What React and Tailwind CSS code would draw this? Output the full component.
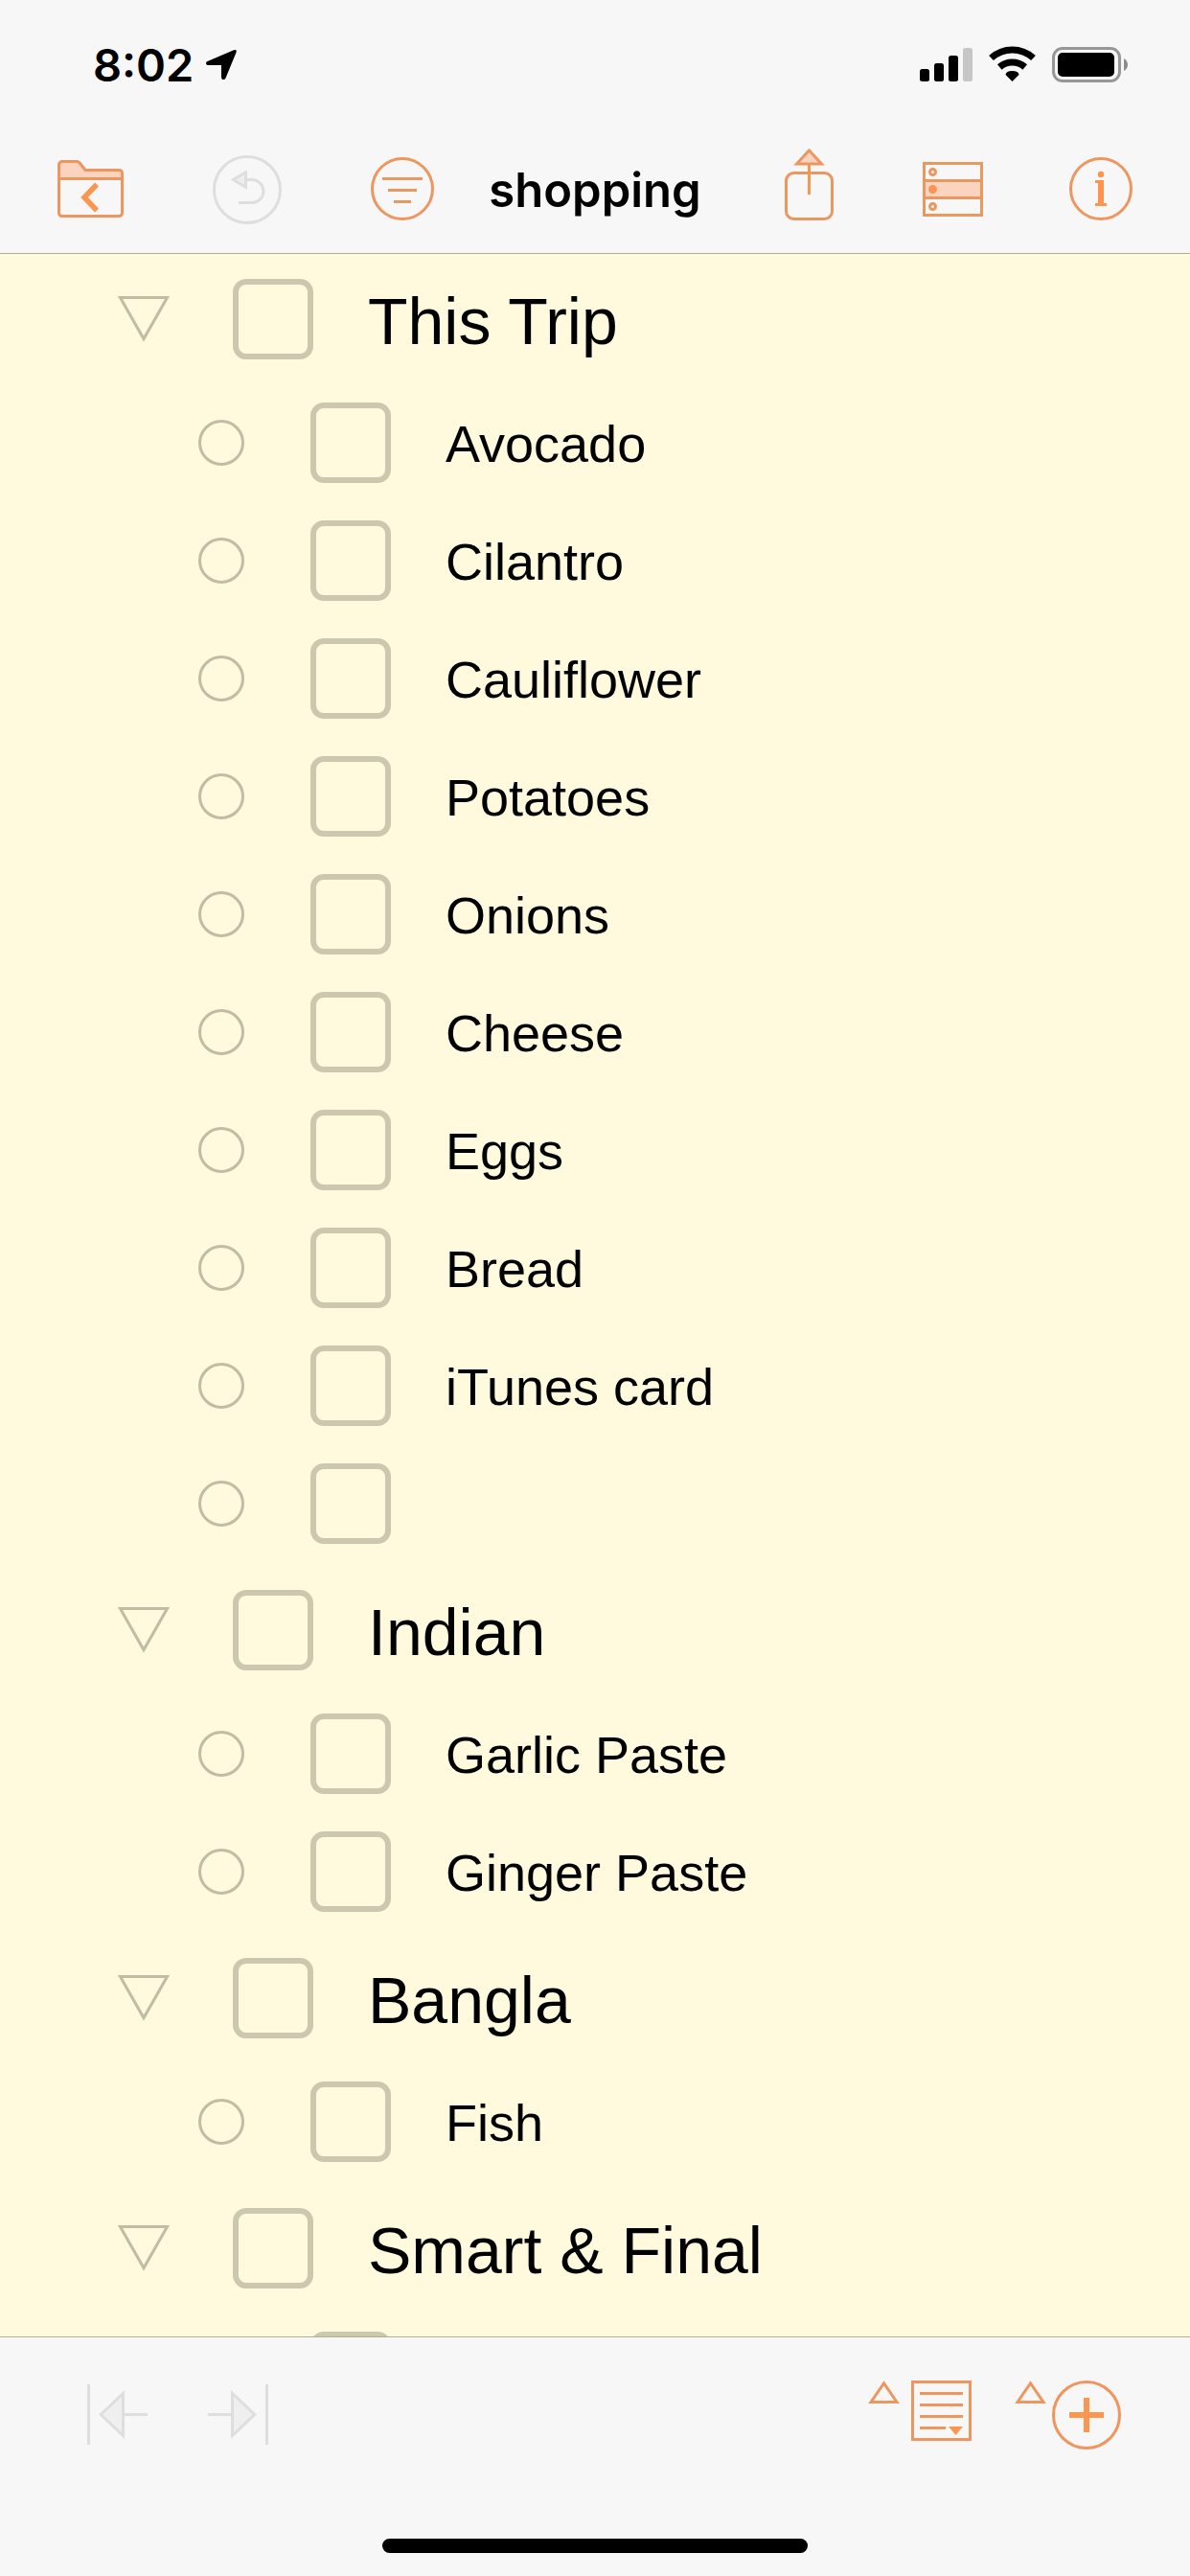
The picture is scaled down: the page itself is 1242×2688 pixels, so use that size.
const ORANGE = "#ee9660";
const BRIGHT = "#fb9550";
const PALE = "#fbd4bf";
const GRAY = "#dedede";
const GRAY_FILL = "#efefef";

const groups = [
  {
    title: "This Trip",
    items: ["Avocado", "Cilantro", "Cauliflower", "Potatoes", "Onions", "Cheese", "Eggs", "Bread", "iTunes card", ""],
  },
  { title: "Indian", items: ["Garlic Paste", "Ginger Paste"] },
  { title: "Bangla", items: ["Fish"] },
  { title: "Smart & Final", items: [""] },
];

function ToolIcon({ label, disabled, children }) {
  return (
    <button type="button" aria-label={label} disabled={disabled} className="block shrink-0">
      <svg viewBox="0 0 72 88" fill="none" stroke={disabled ? GRAY : ORANGE} strokeWidth="3" className="block h-[88px] w-[72px]">
        {children}
      </svg>
    </button>
  );
}

function StatusBar() {
  return (
    <div className="flex h-[132px] items-start justify-between pt-12 pr-16 pl-[97px]">
      <div className="flex gap-3">
        <span className="font-['Inter',sans-serif] text-[47px] leading-10 font-semibold">8:02</span>
        <svg viewBox="0 0 34 40" className="h-10 w-[34px]" role="img" aria-label="Location in use">
          <path d="M2.500 16 30 4.200Q33.500 3.200 32.500 6.800L21.500 33.500Q20.500 35.500 18.500 35Q17 34.500 17 32.500V20H3Q1 19.800 1 18Q1 16.600 2.500 16Z" />
        </svg>
      </div>
      <div className="flex gap-4">
        <svg viewBox="0 0 56 40" className="h-10 w-14" role="img" aria-label="Signal strength">
          <rect x="0" y="24" width="10" height="13" rx="2.500" />
          <rect x="15" y="18" width="10" height="19" rx="2.500" />
          <rect x="30" y="10" width="10" height="27" rx="2.500" />
          <rect x="45" y="2" width="10" height="35" rx="2.500" fill="#c6c6c6" />
        </svg>
        <svg viewBox="0 0 50 40" className="h-10 w-[50px]" role="img" aria-label="Wi-Fi">
          <path d="M2.500 12.500A32.500 32.500 0 0 1 46.500 12.500" fill="none" stroke="#000" strokeWidth="7" />
          <path d="M11.300 22A20 20 0 0 1 37.700 22" fill="none" stroke="#000" strokeWidth="7" />
          <path d="M24.500 37 17.500 30Q18 26 24.500 26T31.500 30Z" />
        </svg>
        <svg viewBox="0 0 80 40" className="h-10 w-20" role="img" aria-label="Battery">
          <rect x="1.500" y="2.500" width="69" height="34" rx="9.500" fill="none" stroke="#979797" strokeWidth="3" />
          <rect x="6" y="7" width="59" height="25" rx="5" />
          <path d="M75 13Q79 15.500 79 19.500T75 26Z" fill="#8c8c8c" />
        </svg>
      </div>
    </div>
  );
}

function Toolbar() {
  return (
    <nav className="grid h-[132px] grid-cols-[1fr_auto_1fr] items-center px-[58px]">
      <div className="flex gap-[92px]">
        <ToolIcon label="Documents">
          <path d="M3.500 32V18.500q0-4 4-4H22q2 0 3.200 1.400L31 23.500h35q3.500 0 3.500 3.500v5Z" fill={PALE} stroke="none" />
          <path d="M3.500 18.500q0-4 4-4H22q2 0 3.200 1.400L31 23.500h35q3.500 0 3.500 3.500v41q0 3.500-3.500 3.500H7q-3.500 0-3.500-3.500ZM3.500 32.500h66" />
          <path d="M43 38.500 30 52 43 65.500" stroke={BRIGHT} strokeWidth="5.500" />
        </ToolIcon>
        <ToolIcon label="Undo" disabled>
          <circle cx="36" cy="44" r="34.500" />
          <path d="M36 33.500h5a12 12 0 0 1 0 24H27" />
          <path d="M21.500 33.500 34.500 25.800v15.400Z" fill={GRAY_FILL} />
        </ToolIcon>
        <ToolIcon label="Filter">
          <circle cx="34" cy="43" r="31.500" />
          <path d="M13 32.500h42M19 44.500h30M25 56.500h18" />
        </ToolIcon>
      </div>
      <h1 className="pt-[2px] font-['Inter',sans-serif] text-[49px] leading-[60px] font-semibold">shopping</h1>
      <div className="flex justify-end gap-20">
        <ToolIcon label="Share">
          <rect x="12.500" y="26.500" width="48" height="48" rx="8" />
          <path d="M36.500 3 49.500 17h-26Z" fill={PALE} />
          <path d="M36.500 17v32" stroke={BRIGHT} />
        </ToolIcon>
        <ToolIcon label="View options">
          <rect x="4.500" y="34.500" width="60" height="18" fill={PALE} />
          <rect x="4.500" y="16.500" width="60" height="54" />
          <circle cx="13.500" cy="25.500" r="3" />
          <circle cx="13.500" cy="43.500" r="4.500" fill={BRIGHT} stroke="none" />
          <circle cx="13.500" cy="61.500" r="3" />
        </ToolIcon>
        <ToolIcon label="Info">
          <circle cx="37" cy="43" r="31.500" />
          <circle cx="37" cy="28" r="3.200" fill={BRIGHT} stroke="none" />
          <path d="M31 35.500h6M31 59.500h12" stroke={BRIGHT} />
          <path d="M37 34v27" stroke={BRIGHT} strokeWidth="6" />
        </ToolIcon>
      </div>
    </nav>
  );
}

function Check({ id, label }) {
  return (
    <input
      id={id}
      type="checkbox"
      aria-label={label}
      className="size-[84px] shrink-0 appearance-none rounded-[14px] border-[6px] border-[#ccc8b0] checked:bg-[#ccc8b0]"
    />
  );
}

function Item({ id, text }) {
  return (
    <li className="flex items-center pt-[17px] pb-[22px]">
      <span className="mr-[66px] flex w-[54px] shrink-0 justify-center">
        <span className="size-12 rounded-full border-[3px] border-[#c1bda5]" />
      </span>
      <Check id={id} label={text ? undefined : "Untitled item"} />
      {text && (
        <label htmlFor={id} className="ml-[57px] pt-[2px] text-[54px] leading-[72px]">
          {text}
        </label>
      )}
    </li>
  );
}

function Group({ group, index }) {
  const id = `group-${index}`;
  return (
    <li>
      <div className="flex items-center pt-[26px] pb-7">
        <button type="button" aria-label={`Collapse ${group.title}`} aria-expanded="true" className="mr-[66px] shrink-0">
          <svg viewBox="0 0 54 48" className="block h-12 w-[54px]" fill="none" stroke="#c1bda5" strokeWidth="3">
            <path d="M2.500 1.500h49L27 44.600Z" />
          </svg>
        </button>
        <Check id={id} />
        <label htmlFor={id} className="ml-[57px] pt-1 text-[68px] leading-[80px]">
          {group.title}
        </label>
      </div>
      <ul className="pl-[81px]">
        {group.items.map((text, i) => (
          <Item key={i} id={`${id}-item-${i}`} text={text} />
        ))}
      </ul>
    </li>
  );
}

function BottomBar() {
  return (
    <footer className="shrink-0 border-t border-[#b2ae9b] bg-[#f7f7f7] pt-[45px] pb-6">
      <div className="flex justify-between pr-[71px] pl-[91px]">
        <div className="flex gap-[62px]">
          <button type="button" disabled aria-label="Outdent">
            <svg viewBox="0 0 64 72" className="block h-[72px] w-16" fill="none" stroke={GRAY} strokeWidth="3">
              <path d="M1.500 4v63M38 35.500h25" />
              <path d="M14.200 35.500 37.500 13.500v44Z" fill={GRAY_FILL} />
            </svg>
          </button>
          <button type="button" disabled aria-label="Indent">
            <svg viewBox="0 0 64 72" className="block h-[72px] w-16" fill="none" stroke={GRAY} strokeWidth="3">
              <path d="M61.500 4v63M0 35.500h25" />
              <path d="M48.800 35.500 25.500 13.500v44Z" fill={GRAY_FILL} />
            </svg>
          </button>
        </div>
        <div className="flex gap-[45px]">
          <button type="button" aria-label="Edit note">
            <svg viewBox="0 0 108 72" className="block h-[72px] w-[108px]" fill="none" stroke={ORANGE} strokeWidth="3">
              <path d="M16.500 2.800 30 22.500H3Z" />
              <rect x="46.500" y="1.500" width="60" height="60" />
              <path d="M54 13.500h45M54 25.500h45M54 37.500h45M54 49.500h27" />
              <path d="M84 48h15l-7.500 9Z" fill={BRIGHT} stroke="none" />
            </svg>
          </button>
          <button type="button" aria-label="Add row">
            <svg viewBox="0 0 112 72" className="block h-[72px] w-28" fill="none" stroke={ORANGE} strokeWidth="3">
              <path d="M16.500 2.800 30 22.500H3Z" />
              <circle cx="75" cy="36" r="34.500" />
              <path d="M57 36h36M75 18v36" stroke={BRIGHT} strokeWidth="6" />
            </svg>
          </button>
        </div>
      </div>
      <div className="mx-auto mt-[93px] h-[15px] w-[444px] rounded-full bg-black" />
    </footer>
  );
}

export default function App() {
  return (
    <div className="flex h-screen flex-col bg-[#fff9de] font-['Liberation_Sans',Arial,sans-serif] text-black">
      <header className="shrink-0 border-b border-[#b2ae9b] bg-[#f7f7f7]">
        <StatusBar />
        <Toolbar />
      </header>
      <main className="min-h-0 flex-1 overflow-y-auto [scrollbar-width:none]">
        <ul className="pl-[123px]">
          {groups.map((group, i) => (
            <Group key={group.title} group={group} index={i} />
          ))}
        </ul>
      </main>
      <BottomBar />
    </div>
  );
}
